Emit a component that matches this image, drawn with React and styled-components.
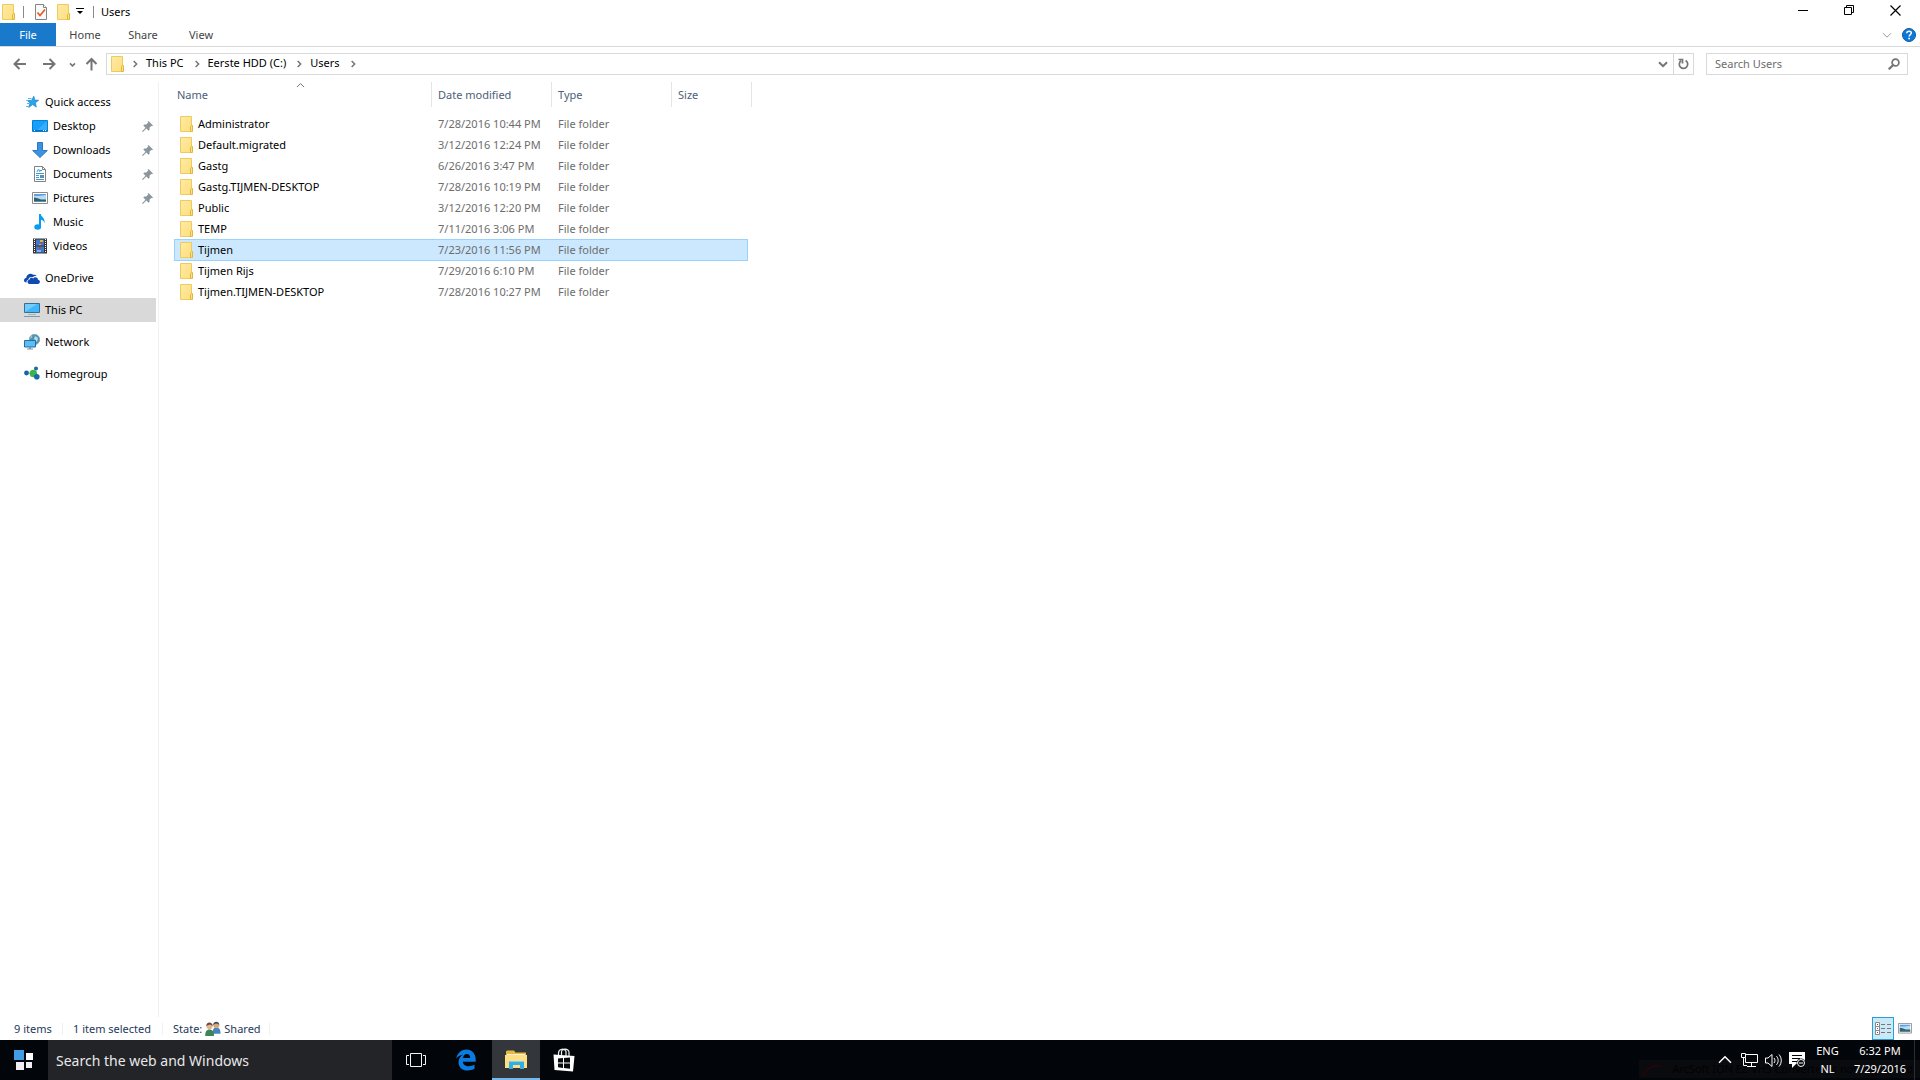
import React, { useState } from 'react';
import styled, { createGlobalStyle, css } from 'styled-components';

const colors = {
  accent: '#1979ca',
  line: '#d9d9d9',
  lightLine: '#f0f0f0',
  headText: '#4c607a',
  muted: '#6d6d6d',
  icon: '#747474',
  status: '#1e395b',
};

const GlobalStyle = createGlobalStyle`
  * {
    box-sizing: border-box;
  }

  body {
    margin: 0;
    background: #fff;
    color: #000;
    font-family: "Noto Sans", "Open Sans", sans-serif;
    font-size: 11px;
    line-height: 16px;
    overflow: hidden;
  }

  button, input {
    font: inherit;
    color: inherit;
    background: none;
    border: 0;
    padding: 0;
    margin: 0;
  }

  svg {
    display: block;
    flex: none;
  }
`;

const Desktop = styled.div`
  display: flex;
  flex-direction: column;
  height: 100vh;
`;

// TITLE BAR
const TitleBar = styled.header`
  display: flex;
  align-items: center;
  height: 23px;
  padding: 0 2px;
`;

const QuickTools = styled.div`
  display: flex;
  align-items: center;
`;

const Divider = styled.span`
  width: 1px;
  height: 12px;
  margin: 0 7px 0 8px;
  background: #8a8a8a;
`;

const ToolButton = styled.button`
  display: flex;
  align-items: center;
  justify-content: center;
  width: ${props => props.$width || 22}px;
  height: 22px;
`;

const WindowTitle = styled.h1`
  margin: 0;
  font-size: 11px;
  font-weight: 400;
  flex: 1;
`;

const WindowButton = styled.button`
  display: flex;
  align-items: center;
  justify-content: center;
  width: 46px;
  height: 20px;
  align-self: flex-start;
`;

// RIBBON
const Ribbon = styled.nav`
  display: flex;
  align-items: stretch;
  height: 24px;
  border-bottom: 1px solid ${colors.line};
`;

const RibbonTab = styled.button`
  min-width: 58px;
  color: #444;

  ${props => props.$file && css`
    min-width: 56px;
    color: #fff;
    background: ${colors.accent};
  `}
`;

const RibbonEnd = styled.div`
  display: flex;
  align-items: center;
  margin-left: auto;
`;

// ADDRESS BAR
const AddressRow = styled.div`
  display: flex;
  align-items: center;
  height: 34px;
  margin-bottom: 1px;
  padding: 0 12px 0 8px;
`;

const NavButtons = styled.div`
  display: flex;
  align-items: center;
  width: 98px;
`;

const AddressBox = styled.div`
  display: flex;
  align-items: center;
  flex: 1;
  height: 22px;
  padding-left: 4px;
  border: 1px solid ${colors.line};
`;

const Crumb = styled.button`
  padding: 0 2px 2px 0;
  white-space: nowrap;
`;

const CrumbArrow = styled.span`
  display: flex;
  justify-content: center;
  width: 22px;
`;

const AddressEnd = styled.div`
  display: flex;
  align-self: stretch;
  align-items: center;
  margin-left: auto;
`;

const Refresh = styled(ToolButton)`
  height: 20px;
  border-left: 1px solid ${colors.line};
`;

const SearchBox = styled.label`
  display: flex;
  align-items: center;
  width: 202px;
  height: 22px;
  margin-left: 12px;
  padding: 0 7px 0 8px;
  border: 1px solid ${colors.line};

  input {
    flex: 1;
    min-width: 0;
    outline: 0;
  }

  input::placeholder {
    color: ${colors.muted};
    opacity: 1;
  }
`;

// CONTENT
const Content = styled.div`
  display: flex;
  flex: 1;
  min-height: 0;
`;

const Sidebar = styled.aside`
  width: 159px;
  padding: 8px 2px 0 0;
  border-right: 1px solid ${colors.lightLine};
`;

const SideGroup = styled.ul`
  list-style: none;
  margin: 0 0 8px;
  padding: 0;
`;

const SideItem = styled.button`
  display: flex;
  align-items: center;
  gap: 5px;
  width: 100%;
  height: 24px;
  padding: 0 3px 0 ${props => (props.$nested ? 32 : 24)}px;
  text-align: left;
  background: ${props => (props.$active ? '#d9d9d9' : 'none')};
`;

const SideLabel = styled.span`
  flex: 1;
`;

const Main = styled.main`
  flex: 1;
  padding-left: 15px;
`;

const FileTable = styled.table`
  width: 578px;
  table-layout: fixed;
  border-collapse: separate;
  border-spacing: 0;
`;

const HeadCell = styled.th`
  position: relative;
  height: 25px;
  padding: 0 0 0 ${props => (props.$first ? 3 : 6)}px;
  border-right: 1px solid #e5e5e5;
  color: ${colors.headText};
  font-weight: 400;
  text-align: left;
`;

const SortMark = styled.span`
  position: absolute;
  top: 0;
  left: 0;
  right: 4px;
  display: flex;
  justify-content: center;
`;

const Spacer = styled.td`
  height: 6px;
  padding: 0;
`;

const Cell = styled.td`
  height: 21px;
  padding: 0 0 0 6px;
  color: ${colors.muted};
  white-space: nowrap;
`;

const NameBox = styled.span`
  display: flex;
  align-items: center;
  gap: 5px;
  color: #000;
`;

const FileRow = styled.tr`
  ${props => props.$selected && css`
    ${Cell} {
      background: #cce8ff;
      border-top: 1px solid #99d1ff;
      box-shadow: 0 1px 0 #99d1ff;
    }

    ${Cell}:first-child {
      border-left: 1px solid #99d1ff;
      padding-left: 5px;
    }

    ${Cell}:nth-child(4) {
      border-right: 1px solid #99d1ff;
    }
  `}
`;

// STATUS BAR
const StatusBar = styled.footer`
  display: flex;
  align-items: center;
  height: 23px;
  padding: 0 4px 0 14px;
  color: ${colors.status};
`;

const StatusItem = styled.span`
  display: flex;
  align-items: center;
  gap: ${props => props.$gap || 0}px;
  width: ${props => props.$width}px;
  height: 12px;
  margin-right: 10px;
  border-right: 1px solid ${colors.lightLine};
  white-space: nowrap;
`;

const ViewButtons = styled.div`
  display: flex;
  margin-left: auto;
`;

const ViewButton = styled.button`
  display: flex;
  align-items: center;
  justify-content: center;
  width: 22px;
  height: 23px;
  border: 1px solid ${props => (props.$active ? '#26a0da' : 'transparent')};
  background: ${props => (props.$active ? '#cbe8f6' : 'none')};
`;

// TASKBAR
const Taskbar = styled.footer`
  position: relative;
  display: flex;
  height: 40px;
  background: #02050a;
  color: #fff;
`;

const TaskButton = styled.button`
  display: flex;
  align-items: center;
  justify-content: center;
  width: ${props => props.$width || 48}px;
  height: 40px;

  ${props => props.$active && css`
    background: #33363a;
    border-bottom: 2px solid #76b9ed;
  `}
`;

const TaskSearch = styled.input`
  width: 344px;
  padding: 2px 8px 0;
  background: #222428;
  font-size: 14px;
  outline: 0;

  &::placeholder {
    color: #e8e8e8;
    opacity: 1;
  }
`;

const Tray = styled.div`
  position: relative;
  display: flex;
  align-items: center;
  margin-left: auto;
  line-height: 18px;
  text-align: center;
`;

const TrayButton = styled.button`
  display: flex;
  align-items: center;
  justify-content: center;
  width: 24px;
  height: 36px;
`;

const Language = styled.button`
  width: 37px;
  line-height: 18px;
`;

const Clock = styled.time`
  width: 68px;
`;

const ShowDesktop = styled.button`
  width: 6px;
  height: 40px;
  border-left: 1px solid #2b2d31;
`;

// notification that is almost faded out behind the tray
const FadedToast = styled.div`
  position: absolute;
  right: 0;
  bottom: 2px;
  display: flex;
  align-items: center;
  gap: 6px;
  min-width: 270px;
  height: 18px;
  padding: 0 4px 0 3px;
  background: #090b0f;
  color: #020203;
  white-space: nowrap;
`;

const FolderIcon = () => (
  <svg width="13" height="16" viewBox="0 0 13 16">
    <defs>
      <linearGradient id="folderFill" x1="0" y1="0" x2="1" y2="1">
        <stop offset="0" stopColor="#ffeaa6" />
        <stop offset="1" stopColor="#fddf7d" />
      </linearGradient>
    </defs>
    <path d="M.5.5h11v15h-11z" fill="url(#folderFill)" stroke="#eecb5c" />
    <path d="M10.5 15.5v-5l1-1h1v6z" fill="#fbe088" stroke="#dfb73e" />
  </svg>
);

const PropertiesIcon = () => (
  <svg width="12" height="16" viewBox="0 0 12 16">
    <path d="M.5.5h8l3 3v12H.5z" fill="#f7f9fa" stroke="#858585" />
    <path d="M8.5.5v3h3" fill="#fff" stroke="#858585" />
    <path d="M2.5 8.5l2.500 3 5-6" fill="none" stroke="#e8591c" strokeWidth="1.7" />
  </svg>
);

const Chevron = ({ dir = 'right', size = 6, color = colors.icon, weight = 1.5 }) => {
  const rotate = { right: 0, down: 90, up: -90 }[dir];
  return (
    <svg width={size} height={size} viewBox="0 0 8 8" overflow="visible">
      <path d="M2.200 0l4 4-4 4" fill="none" stroke={color} strokeWidth={weight * 8 / size} transform={`rotate(${rotate} 4 4)`} />
    </svg>
  );
};

const ArrowIcon = ({ dir = 'left' }) => (
  <svg width="13" height="12" viewBox="0 0 13 12" overflow="visible">
    <path
      d="M13 6H1.500M6.500 1l-5 5 5 5"
      fill="none"
      stroke={colors.icon}
      strokeWidth="2"
      transform={`rotate(${{ left: 0, right: 180, up: 90 }[dir]} 6.5 6)`}
    />
  </svg>
);

const MenuDownIcon = () => (
  <svg width="8" height="7" viewBox="0 0 8 7">
    <path d="M0 0h8v1H0zM1 3h6L4 6z" />
  </svg>
);

const MinimizeIcon = () => (
  <svg width="10" height="10" viewBox="0 0 10 10"><path d="M0 5h10v1H0z" /></svg>
);

const RestoreIcon = () => (
  <svg width="10" height="10" viewBox="0 0 10 10" fill="none" stroke="#000">
    <path d="M.5 2.500h7v7h-7zM2.500 2V.5h7v7H8" />
  </svg>
);

const CloseIcon = () => (
  <svg width="11" height="11" viewBox="0 0 11 11"><path d="M.5.5l10 10M10.500.5l-10 10" stroke="#000" strokeWidth="1.2" /></svg>
);

const HelpIcon = () => (
  <svg width="14" height="14" viewBox="0 0 14 14">
    <circle cx="7" cy="7" r="6.5" fill="#0f78d4" stroke="#0a5cab" />
    <path d="M4.800 5.300C4.800 2.500 9.300 2.600 9.300 5c0 1.600-2.100 1.600-2.100 3.500" fill="none" stroke="#fff" strokeWidth="1.5" />
    <path d="M6.300 9.800h1.700v1.500H6.300z" fill="#fff" />
  </svg>
);

const RefreshIcon = () => (
  <svg width="11" height="12" viewBox="0 0 11 12" fill="none" stroke={colors.icon}>
    <path d="M7.600 2.600a4.200 4.200 0 1 1-4.500.2" strokeWidth="1.7" />
    <path d="M.5 1.500h4v4" strokeWidth="1.7" />
  </svg>
);

const SearchIcon = () => (
  <svg width="12" height="12" viewBox="0 0 12 12" fill="none" stroke={colors.icon}>
    <circle cx="7.5" cy="4.5" r="3.4" strokeWidth="1.7" />
    <path d="M5.200 7L.7 11.300" strokeWidth="2.2" />
  </svg>
);

const PinIcon = () => (
  <svg width="11" height="11" viewBox="0 0 11 11" fill="#8b959e">
    <path d="M6.500 0L11 4.500l-1 .7-.8-.2-1.700 1.800.1 2-1 1L4.300 7.500.8 11 0 10.300l3.500-3.600L1.300 4.400l1-1 2 .2L6 1.800 5.800.8z" />
  </svg>
);

const StarIcon = () => (
  <svg width="16" height="16" viewBox="0 0 16 16">
    <path d="M9.800 2.200l1 3.900 3.800.2-3.200 2.400.9 4.400-3.700-2.500-3.900 2.800 1.300-4.400L3.400 6.600l4.200-.2z" fill="#2ba5ea" stroke="#1b83c9" strokeWidth=".7" />
    <path d="M4 4.500h3.500M2.200 6.500H4M3 9.500h2M2 12.500h2.500" stroke="#54b5ee" />
  </svg>
);

const DesktopIcon = () => (
  <svg width="16" height="16" viewBox="0 0 16 16">
    <path d="M.5 2.500h15v11H.5z" fill="#17a0fb" stroke="#0b7fcf" />
    <path d="M15 3L4 13h11z" fill="#36aefc" />
    <path d="M1 12h14v1H1z" fill="#0b70bb" />
    <path d="M2 12h1v1H2zM11 12h1v1h-1zM13 12h1v1h-1z" fill="#fff" />
  </svg>
);

const DownloadsIcon = () => (
  <svg width="16" height="16" viewBox="0 0 16 16">
    <path d="M5.500.5h5v8h4.800L8 15.500.7 8.500h4.800z" fill="#3b93e0" stroke="#2a78c4" />
  </svg>
);

const DocumentsIcon = () => (
  <svg width="16" height="16" viewBox="0 0 16 16">
    <path d="M2.500.5h8l3 3v12h-11z" fill="#fff" stroke="#838383" />
    <path d="M10.500.5v3h3" fill="none" stroke="#838383" />
    <path d="M5 6l1.500-3L8 6M8 4.500h2M4 7.500h8M4 9.500h3M4 11.500h3M4 13.500h8" stroke="#3d9bdc" fill="none" />
    <path d="M8 9h4v3H8z" fill="#5f8fb0" />
  </svg>
);

const PictureIcon = ({ width = 16 }) => (
  <svg width={width} height={width * 0.75} viewBox="0 0 16 12">
    <path d="M.5.5h15v11H.5z" fill="#fff" stroke="#8b8b8b" />
    <path d="M2 2h12v8H2z" fill="#b9dcf5" />
    <path d="M2 2h12v1L7 4 2 4z" fill="#5d9fe0" />
    <path d="M2 5.500l3 .5 4 1.500h5V10H2z" fill="#355f68" />
    <path d="M2 9h12v1H2z" fill="#568db0" />
  </svg>
);

const MusicIcon = () => (
  <svg width="16" height="16" viewBox="0 0 16 16" fill="#0a9bf2">
    <ellipse cx="5.7" cy="13" rx="3.4" ry="2.7" />
    <path d="M7 0h1.800c.2 3 4.700 4 3.700 9.500-.3-2.500-1.700-3.300-3.500-3.700V13H7z" />
  </svg>
);

const VideosIcon = () => (
  <svg width="16" height="16" viewBox="0 0 16 16">
    <path d="M1 .5h14v15H1z" fill="#35363a" />
    <path d="M4 1.500h8v6H4zM4 8.500h8v6H4z" fill="#3f78cf" />
    <path d="M8 2h3v2H8zM7 6h2v1H7z" fill="#e0b43a" />
    <path d="M8 4h3v1H8zM7 9h2v2H7z" fill="#c4462e" />
    <path d="M5 12h4v2H5z" fill="#88b2e8" />
    <path d="M2.500 1v14M13.500 1v14" stroke="#fff" strokeDasharray="1 1" />
  </svg>
);

const OneDriveIcon = () => (
  <svg width="16" height="16" viewBox="0 0 16 16" fill="#0f4bb0">
    <path d="M0 10.500C0 8.600 1.500 8 2.200 8 2.400 4.500 6.500 2.500 9.200 4.800c1.300-.5 3 .2 3.300 1.200-2-.4-3 .3-3.700 1.200C6 6.500 4.500 8 4.600 9.500c-1.600.3-2.400 1.500-2 3C1 12.500 0 11.700 0 10.500z" />
    <path d="M3.500 11.600c0-1.200 1-1.900 2-1.900C5.700 7.500 8.300 7.200 9.200 8.500c1.500-2.300 5-1 4.700 1.300 2.800.2 2.600 4-.1 4.200H5.500c-1.200 0-2-1-2-2.400z" />
  </svg>
);

const ThisPcIcon = () => (
  <svg width="16" height="16" viewBox="0 0 16 16">
    <path d="M.5 1.500h15v9H.5z" fill="#42b6fb" stroke="#356f96" />
    <path d="M1 10V2h12z" fill="#74cbfd" />
    <path d="M4 12h8v1H4z" fill="#9db4c4" />
    <path d="M0 14.500h16" stroke="#7e97aa" />
  </svg>
);

const NetworkIcon = () => (
  <svg width="16" height="16" viewBox="0 0 16 16">
    <circle cx="10.5" cy="5.5" r="5.2" fill="#4d93b5" stroke="#89aabd" />
    <path d="M8 1.500c1 1.500-1 3-2 3zM11 2l3 2-1 4-3-3z" fill="#b8dce8" />
    <path d="M.5 6.500h11v6.500H.5z" fill="#57c0fb" stroke="#2c6c96" />
    <path d="M5 13h2v1.500H5zM3 14.500h6v1H3z" fill="#7d97a8" />
  </svg>
);

const HomegroupIcon = () => (
  <svg width="16" height="16" viewBox="0 0 16 16">
    <path d="M3 7.500l6-1 3-4M9 8l4 4" stroke="#9bb6c8" fill="none" />
    <circle cx="2.5" cy="7" r="2.4" fill="#1762ab" />
    <circle cx="12" cy="2.5" r="2" fill="#1e69a8" />
    <circle cx="9.3" cy="7.5" r="3.7" fill="#3cb44a" />
    <circle cx="12.8" cy="10.7" r="2.8" fill="#1766ae" />
  </svg>
);

const SharedIcon = () => (
  <svg width="16" height="16" viewBox="0 0 17 16">
    <path d="M8.500 13c-.6-5 1-6.500 3.500-6.500s4.500 1.500 4.500 6.500z" fill="#4584bd" />
    <circle cx="12" cy="4" r="3.1" fill="#d9a67c" />
    <path d="M8.700 4c-.4-4.800 6.800-5 6.500 0-1-1.800-4-2.200-6.500 0z" fill="#49525a" />
    <path d="M.3 15.500C0 11 1.500 8.500 4.800 8.500s5 2.500 4.700 7z" fill="#3e8657" />
    <circle cx="4.8" cy="5" r="3.2" fill="#e4b48c" />
    <path d="M1.400 5C1-.3 8.400 0 8.200 5 7 3.200 4.500 2.500 1.400 5z" fill="#684b37" />
  </svg>
);

const DetailsViewIcon = () => (
  <svg width="16" height="13" viewBox="0 0 16 13" fill="none">
    <path d="M.5.5h4v12h-4zM.5 4.500h4M.5 8.500h4" fill="#fff" stroke="#8a8a8a" />
    <path d="M6 2.500h4M12 2.500h4M6 6.500h4M12 6.500h4M6 10.500h4M12 10.500h4" stroke="#777" />
    <path d="M2 2h1v1H2z" fill="#444" />
    <path d="M2 6h1v1H2z" fill="#2372d9" />
    <path d="M2 10h1v1H2z" fill="#e02020" />
  </svg>
);

const StartIcon = () => (
  <svg width="20" height="20" viewBox="0 0 20 20">
    <path d="M0 0h10v10H0z" fill="#429ce3" />
    <path d="M12 3h7v7h-7z" fill="#fff" />
    <path d="M2 12h8v8H2zM12 12h6v6h-6z" fill="#eeeef4" />
  </svg>
);

const TaskViewIcon = () => (
  <svg width="20" height="14" viewBox="0 0 20 14" fill="none" stroke="#f5f5f5">
    <path d="M4.500.5h11v13h-11zM3 2.500H.5v9H3M17 2.500h2.500v9H17" />
  </svg>
);

const EdgeIcon = () => (
  <svg width="20" height="22" viewBox="0 0 20 22">
    <path
      d="M.3 9.700C1 4.500 5 .5 10.300.5c6 0 9.400 4.500 9.400 10v2.200H6.800c.3 3 3 4.500 6 4.500 2 0 4-.6 5.700-1.700v4.300c-2 1.200-4.400 1.700-7 1.700-5.500 0-9-3.500-9-8.300 0-3.200 1.700-6 4.600-7.500C4 6.300 1.600 7.300.3 9.700zM7 8.900h7.200c0-2.400-1.300-4-3.500-4C8.600 4.900 7.300 6.700 7 8.900z"
      fill="#0a7be0"
    />
  </svg>
);

const ExplorerIcon = () => (
  <svg width="22" height="19" viewBox="0 0 22 19">
    <path d="M1 1.500L2 .5h7l1.500 2H21v15H1z" fill="#e7b849" />
    <path d="M2 4h18v3H2z" fill="#fff3c9" />
    <path d="M0 5h22v13H0z" fill="#fddf86" />
    <path d="M4 19v-7l1-1h13l1 1v7h-4v-4H8v4z" fill="#30aee8" />
    <path d="M4 12l1-1h13l1 1z" fill="#7fd2f5" />
  </svg>
);

// shopping bag with the four panes on its front
const StoreIcon = () => (
  <svg width="22" height="24" viewBox="0 0 22 24">
    <path d="M5.500 8V5c0-4 6-5.500 7.500-1.500V8M8.500 7V4c0-4 7-3.500 7.500 0v4" fill="none" stroke="#eee" strokeWidth="1.2" />
    <path d="M.5 6.500L21.500 8l-1.500 15.500L1.500 22z" fill="#fff" />
    <path d="M5 10.500l5-.5v4.500H5zM11 10l6-.5v5h-6zM5 15.500h5V20l-5-.7zM11 15.500h6v5.300l-6-.7z" fill="#080a0e" />
  </svg>
);

const NetworkTrayIcon = () => (
  <svg width="17" height="14" viewBox="0 0 17 14" fill="none" stroke="#fff">
    <path d="M5 1.500h11.500v8H4.500V5M10.500 10v3M6 13.500h9" />
    <path d="M.5.5h4v4h-4zM2.500 4.500v8H6" />
  </svg>
);

const SoundIcon = () => (
  <svg width="17" height="15" viewBox="0 0 17 15" fill="none" stroke="#fff">
    <path d="M.5 5h2.500l4-3.500v12L3 10H.5z" />
    <path d="M9 5c1.300 1.500 1.300 3.500 0 5M11.500 3.200c2.200 2.500 2.200 6 0 8.600M14 1.500c3 3.500 3 8.500 0 12" />
  </svg>
);

const ActionIcon = () => (
  <svg width="17" height="16" viewBox="0 0 17 16">
    <path d="M0 0h16v12H7l-4 4v-4H0z" fill="#fff" />
    <path d="M3 3.500h10M3 6.500h8M3 9.500h5" stroke="#02050a" />
    <circle cx="12" cy="11" r="4.5" fill="#02050a" />
    <circle cx="12" cy="11" r="3.5" fill="none" stroke="#fff" />
    <path d="M10 11h4" stroke="#fff" />
  </svg>
);

const ArcIcon = () => (
  <svg width="24" height="14" viewBox="0 0 24 14">
    <path d="M0 14C4 3 14-1 24 6 14 3 7 5 3 14z" fill="#1e070b" />
  </svg>
);

const sideGroups = [
  [
    { label: 'Quick access', Icon: StarIcon },
    { label: 'Desktop', Icon: DesktopIcon, nested: true, pinned: true },
    { label: 'Downloads', Icon: DownloadsIcon, nested: true, pinned: true },
    { label: 'Documents', Icon: DocumentsIcon, nested: true, pinned: true },
    { label: 'Pictures', Icon: PictureIcon, nested: true, pinned: true },
    { label: 'Music', Icon: MusicIcon, nested: true },
    { label: 'Videos', Icon: VideosIcon, nested: true },
  ],
  [{ label: 'OneDrive', Icon: OneDriveIcon }],
  [{ label: 'This PC', Icon: ThisPcIcon }],
  [{ label: 'Network', Icon: NetworkIcon }],
  [{ label: 'Homegroup', Icon: HomegroupIcon }],
];

const files = [
  ['Administrator', '7/28/2016 10:44 PM'],
  ['Default.migrated', '3/12/2016 12:24 PM'],
  ['Gastg', '6/26/2016 3:47 PM'],
  ['Gastg.TIJMEN-DESKTOP', '7/28/2016 10:19 PM'],
  ['Public', '3/12/2016 12:20 PM'],
  ['TEMP', '7/11/2016 3:06 PM'],
  ['Tijmen', '7/23/2016 11:56 PM'],
  ['Tijmen Rijs', '7/29/2016 6:10 PM'],
  ['Tijmen.TIJMEN-DESKTOP', '7/28/2016 10:27 PM'],
];

const crumbs = ['This PC', 'Eerste HDD (C:)', 'Users'];

// COMPONENTS
const TopBars = () => (
  <>
    <TitleBar>
      <QuickTools>
        <FolderIcon />
        <Divider />
        <ToolButton $width={20} aria-label="Properties"><PropertiesIcon /></ToolButton>
        <ToolButton $width={24} aria-label="New folder"><FolderIcon /></ToolButton>
        <ToolButton $width={10} aria-label="Customize toolbar"><MenuDownIcon /></ToolButton>
        <Divider />
      </QuickTools>
      <WindowTitle>Users</WindowTitle>
      <WindowButton aria-label="Minimize"><MinimizeIcon /></WindowButton>
      <WindowButton aria-label="Restore"><RestoreIcon /></WindowButton>
      <WindowButton aria-label="Close"><CloseIcon /></WindowButton>
    </TitleBar>

    <Ribbon>
      <RibbonTab $file>File</RibbonTab>
      <RibbonTab>Home</RibbonTab>
      <RibbonTab>Share</RibbonTab>
      <RibbonTab>View</RibbonTab>
      <RibbonEnd>
        <ToolButton aria-label="Expand ribbon"><Chevron dir="down" size={8} color="#9a9a9a" weight={1} /></ToolButton>
        <ToolButton aria-label="Help"><HelpIcon /></ToolButton>
      </RibbonEnd>
    </Ribbon>

    <AddressRow>
      <NavButtons>
        <ToolButton aria-label="Back"><ArrowIcon /></ToolButton>
        <ToolButton $width={38} aria-label="Forward"><ArrowIcon dir="right" /></ToolButton>
        <ToolButton $width={9} aria-label="Recent locations"><Chevron dir="down" size={5} /></ToolButton>
        <ToolButton $width={29} aria-label="Up"><ArrowIcon dir="up" /></ToolButton>
      </NavButtons>
      <AddressBox>
        <FolderIcon />
        <CrumbArrow><Chevron /></CrumbArrow>
        {crumbs.map(crumb => (
          <React.Fragment key={crumb}>
            <Crumb>{crumb}</Crumb>
            <CrumbArrow><Chevron /></CrumbArrow>
          </React.Fragment>
        ))}
        <AddressEnd>
          <ToolButton $width={20} aria-label="Previous locations"><Chevron dir="down" size={8} weight={2} /></ToolButton>
          <Refresh $width={20} aria-label="Refresh"><RefreshIcon /></Refresh>
        </AddressEnd>
      </AddressBox>
      <SearchBox>
        <input type="text" placeholder="Search Users" aria-label="Search Users" />
        <SearchIcon />
      </SearchBox>
    </AddressRow>
  </>
);

const FileList = () => {
  const [selected, setSelected] = useState('Tijmen');

  return (
    <FileTable>
      <colgroup>
        <col width="258" />
        <col width="120" />
        <col width="120" />
        <col width="76" />
        <col width="4" />
      </colgroup>
      <thead>
        <tr>
          <HeadCell $first>
            Name
            <SortMark><Chevron dir="up" size={7} weight={1} /></SortMark>
          </HeadCell>
          <HeadCell>Date modified</HeadCell>
          <HeadCell>Type</HeadCell>
          <HeadCell colSpan={2}>Size</HeadCell>
        </tr>
      </thead>
      <tbody>
        <tr><Spacer colSpan={5} /></tr>
        {files.map(([name, date]) => (
          <FileRow key={name} $selected={name === selected} onClick={() => setSelected(name)}>
            <Cell><NameBox><FolderIcon />{name}</NameBox></Cell>
            <Cell>{date}</Cell>
            <Cell>File folder</Cell>
            <Cell />
          </FileRow>
        ))}
      </tbody>
    </FileTable>
  );
};

const App = () => (
  <Desktop>
    <GlobalStyle />
    <TopBars />

    <Content>
      <Sidebar>
        {sideGroups.map(group => (
          <SideGroup key={group[0].label}>
            {group.map(({ label, Icon, nested, pinned }) => (
              <li key={label}>
                <SideItem $nested={nested} $active={label === 'This PC'}>
                  <Icon />
                  <SideLabel>{label}</SideLabel>
                  {pinned && <PinIcon />}
                </SideItem>
              </li>
            ))}
          </SideGroup>
        ))}
      </Sidebar>
      <Main>
        <FileList />
      </Main>
    </Content>

    <StatusBar>
      <StatusItem $width={49}>9 items</StatusItem>
      <StatusItem $width={90}>1 item selected</StatusItem>
      <StatusItem $width={97} $gap={3}>State: <SharedIcon /> Shared</StatusItem>
      <ViewButtons>
        <ViewButton $active aria-label="Details view"><DetailsViewIcon /></ViewButton>
        <ViewButton aria-label="Large icons view"><PictureIcon width={14} /></ViewButton>
      </ViewButtons>
    </StatusBar>

    <Taskbar>
      <TaskButton aria-label="Start"><StartIcon /></TaskButton>
      <TaskSearch type="text" placeholder="Search the web and Windows" aria-label="Search the web and Windows" />
      <TaskButton aria-label="Task view"><TaskViewIcon /></TaskButton>
      <TaskButton $width={52} aria-label="Edge"><EdgeIcon /></TaskButton>
      <TaskButton $active aria-label="File Explorer"><ExplorerIcon /></TaskButton>
      <TaskButton aria-label="Store"><StoreIcon /></TaskButton>
      <FadedToast aria-hidden="true"><ArcIcon />ArcSoft ION EZ VHS Converter is not registered.</FadedToast>
      <Tray>
        <TrayButton aria-label="Show hidden icons"><Chevron dir="up" size={12} color="#fff" /></TrayButton>
        <TrayButton aria-label="Network"><NetworkTrayIcon /></TrayButton>
        <TrayButton aria-label="Volume"><SoundIcon /></TrayButton>
        <TrayButton aria-label="Notifications"><ActionIcon /></TrayButton>
        <Language>ENG<br />NL</Language>
        <Clock>6:32 PM<br />7/29/2016</Clock>
        <ShowDesktop aria-label="Show desktop" />
      </Tray>
    </Taskbar>
  </Desktop>
);

export default App;
